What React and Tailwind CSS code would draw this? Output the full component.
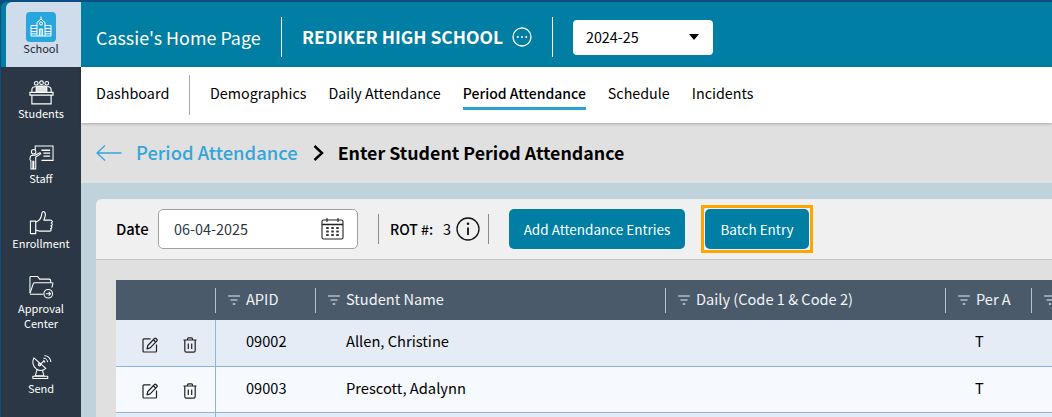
import React from 'react';

const FONT = { fontFamily: '"Noto Sans CJK JP", "Noto Sans", sans-serif' };

function SchoolIcon() {
    return (
        <svg width="24" height="24" viewBox="0 0 24 24" fill="none" stroke="#fff" strokeWidth="1">
            <path d="M2 10.500h6.500M2 10.500v10.500h20V10.500M22 10.500h-6.500" />
            <path d="M8 21V7.500L12 4l4 3.500V21" />
            <path d="M12 4V1.500" />
            <circle cx="12" cy="8.500" r="1.500" />
            <path d="M10.500 21v-7h3v7M12 14v7" />
            <path d="M2 13.500h6M2 16.500h6M2 18.800h6M16 13.500h6M16 16.500h6M16 18.800h6" />
        </svg>
    );
}

function StudentsIcon() {
    return (
        <svg className="shrink-0" width="25" height="25" viewBox="0 0 26 26" fill="none" stroke="#fff" strokeWidth="1.200">
            <circle cx="7.500" cy="3.500" r="1.900" />
            <circle cx="13" cy="2.800" r="1.900" />
            <circle cx="18.500" cy="3.500" r="1.900" />
            <path d="M3 12.500v-2.500c0-2 1.500-3 3-3h1.500M23 12.500v-2.500c0-2-1.500-3-3-3h-1.500" />
            <path d="M7.500 12.500v-4c0-1.500 1-2.300 2.500-2.300h6c1.500 0 2.500.8 2.500 2.300v4" fill="#fff" fillOpacity="0.850" />
            <path d="M1 12.800h24v3H1zM3 15.800v9h20v-9" />
        </svg>
    );
}

function StaffIcon() {
    return (
        <svg className="shrink-0" width="25" height="25" viewBox="0 0 26 26" fill="none" stroke="#fff" strokeWidth="1.100">
            <path d="M6.500 5.500V1h18.500v15H13" />
            <path d="M13 5.500h9M15 8.500h7M15 11.500h7" strokeWidth="1.400" />
            <circle cx="4.800" cy="7" r="2.300" />
            <path d="M1 14.500c0-3 1-4 3.500-4h2l5-2.500.7 1.200-5.200 3.300V25h-2v-8h-1v8h-2V16.500L1 15z" />
        </svg>
    );
}

function ThumbIcon() {
    return (
        <svg className="shrink-0" width="25" height="25" viewBox="0 0 26 26" fill="none" stroke="#fff" strokeWidth="1.200" strokeLinejoin="round">
            <path d="M1.500 11.500h5.500v13H1.500z" />
            <path d="M7 12.500c3-1 5.500-4 6-7 .3-2 .5-3.500 1.500-3.800 1.800-.4 2.700 1.500 2.500 3.500-.2 2-1 3.500-1.500 5.300h7c2 0 2.300 2.600.5 3 1.700.4 1.500 2.800-.2 3 1.400.6 1.200 2.700-.4 3 1 .8.700 2.500-1 2.500H12c-2 0-3-1-5-1" />
        </svg>
    );
}

function FolderIcon() {
    return (
        <svg className="shrink-0" width="25" height="25" viewBox="0 0 26 26" fill="none" stroke="#fff" strokeWidth="1.100" strokeLinejoin="round">
            <path d="M1 19V2.500c0-.7.500-1 1-1h7l2 2.800h10c1 0 1.500.5 1.500 1.500v2" />
            <path d="M1 19l3.500-10c.2-.6.600-1 1.300-1H24c.8 0 1 .6.800 1.200l-1 4" />
            <path d="M1 20h14" />
            <circle cx="20" cy="19.500" r="4.500" />
            <path d="M17.500 19.500h5M20.500 17.500l2 2-2 2" />
        </svg>
    );
}

function DishIcon() {
    return (
        <svg className="shrink-0" width="25" height="25" viewBox="0 0 26 26" fill="none" stroke="#fff" strokeWidth="1.100" strokeLinejoin="round">
            <path d="M5 3c-2 4-1 9 2.500 11.500 3 2 7 2 10-.5z" />
            <circle cx="11" cy="10" r="1.300" />
            <path d="M11 10l5-4" />
            <path d="M15 3.500c2-.3 4 1.500 4.500 4M16 .8c3.500-.3 6.500 2.500 6.800 6.500M14.500 6c1 0 2 .8 2.200 2" />
            <path d="M8.500 15l-2 6.500h9l-1.500-5.500" />
            <path d="M4 22h15.500v2.500H4z" />
        </svg>
    );
}

function EllipsisCircle() {
    return (
        <svg width="20" height="20" viewBox="0 0 20 20" fill="none" stroke="#fff" strokeWidth="1.300">
            <circle cx="10" cy="10" r="9" />
            <circle cx="5.800" cy="10" r="1" fill="#fff" stroke="none" />
            <circle cx="10" cy="10" r="1" fill="#fff" stroke="none" />
            <circle cx="14.200" cy="10" r="1" fill="#fff" stroke="none" />
        </svg>
    );
}

function CalendarIcon() {
    return (
        <svg width="23" height="23" viewBox="0 0 23 23" fill="none" stroke="#222" strokeWidth="1.100">
            <rect x="1" y="3" width="21" height="19" rx="1.500" />
            <path d="M1 7.500h21" strokeWidth="1.300" />
            <path d="M6 1v4M17 1v4" />
            {[6.5, 11.5, 16.5].map(x => [11, 14.500, 18].map(y => (
                <rect key={`${x}-${y}`} x={x - 1.300} y={y - 1} width="2.600" height="2" rx="0.600" fill="#333" stroke="none" />
            )))}
        </svg>
    );
}

function FilterIcon() {
    return (
        <svg width="12" height="10" viewBox="0 0 12 10" fill="none" stroke="#e5e9ee" strokeWidth="1.100">
            <path d="M0 1h12M2.500 5h7" />
            <path d="M4.800 9h2.400" strokeWidth="1.300" />
        </svg>
    );
}

function EditIcon() {
    return (
        <svg width="16" height="16" viewBox="0 0 16 16" fill="none" stroke="#222" strokeWidth="1.200" strokeLinejoin="round">
            <path d="M8.500 1.800H2c-.6 0-1 .4-1 1V14c0 .6.400 1 1 1h11.500c.5 0 1-.4 1-1V7.500" />
            <path d="M5 11.800l.8-3.300L12.500 1.500c.4-.4 1-.4 1.400 0l1 1c.4.400.4 1 0 1.400L8.200 10.900z" />
            <path d="M11.300 2.800l2.600 2.500" />
        </svg>
    );
}

function TrashIcon() {
    return (
        <svg width="14" height="16" viewBox="0 0 14 16" fill="none" stroke="#222" strokeWidth="1.200" strokeLinejoin="round">
            <path d="M.5 3h13M4.500 3V2c0-.7.400-1.200 1-1.200h3c.6 0 1 .5 1 1.200v1" />
            <path d="M1.800 3v10.500c0 1 .7 1.700 1.600 1.700h7.200c.9 0 1.600-.7 1.600-1.700V3" />
            <path d="M5.300 6.500v5.500M8.700 6.500v5.500" />
        </svg>
    );
}

const sideItems = [
    { label: ['Students'], icon: <StudentsIcon />, h: 'h-[65px]' },
    { label: ['Staff'], icon: <StaffIcon />, h: 'h-[65px]' },
    { label: ['Enrollment'], icon: <ThumbIcon />, h: 'h-[65px]' },
    { label: ['Approval', 'Center'], icon: <FolderIcon />, h: 'h-[80px]' },
    { label: ['Send'], icon: <DishIcon />, h: 'h-[65px]' },
];

const tabs = [
    { name: 'Demographics', w: 'ml-5' },
    { name: 'Daily Attendance', w: 'ml-[22px]' },
    { name: 'Period Attendance', w: 'ml-[22px]', active: true },
    { name: 'Schedule', w: 'ml-[22px]' },
    { name: 'Incidents', w: 'ml-[22px]' },
];

const columns = [
    { name: 'APID', w: 'w-[100px]' },
    { name: 'Student Name', w: 'w-[350px]' },
    { name: 'Daily (Code 1 & Code 2)', w: 'w-[280px]' },
    { name: 'Per A', w: 'w-[86px]' },
    { name: '', w: 'w-[40px]' },
];

const rows = [
    { apid: '09002', name: 'Allen, Christine', perA: 'T', bg: 'bg-[#e5ecf5]', h: 'h-[47px]', pad: 'pb-[5px]' },
    { apid: '09003', name: 'Prescott, Adalynn', perA: 'T', bg: 'bg-[#f6f9fd]', h: 'h-[46px]', pad: 'pb-[3px]' },
    { apid: '', name: '', perA: '', bg: 'bg-[#e5ecf5]', h: 'h-[46px]', pad: '' },
];

export default function App() {
    return (
        <div className="w-[1052px] h-[417px] overflow-hidden flex bg-[#0b4f82] pt-[2px] text-black" style={FONT}>
            <div className="w-[81px] shrink-0 flex flex-col bg-[#2b3744] border-l border-[#0b4f82] rounded-tl-[6px] overflow-hidden">
                <div className="h-[65px] shrink-0 flex bg-[#007ea3]">
                    <div className="w-[5px] shrink-0"></div>
                    <div className="flex-1 bg-[#cfdcec] rounded-tl-[6px] flex flex-col items-center pt-[10px] pr-[5px]">
                        <div className="w-[30px] h-[30px] rounded-[4px] bg-[#29a7dc] flex items-center justify-center">
                            <SchoolIcon />
                        </div>
                        <div className="text-[11px] leading-[16px] mt-[-2px] text-[#1c2630]">School</div>
                    </div>
                </div>
                {sideItems.map(item => (
                    <div key={item.label[0]} className={`${item.h} shrink-0 flex flex-col items-center pt-[13px] text-white`}>
                        {item.icon}
                        <div className="mt-[1px] text-center">
                            {item.label.map(line => (
                                <div key={line} className="text-[11px] leading-[15px]">{line}</div>
                            ))}
                        </div>
                    </div>
                ))}
            </div>

            <div className="flex-1 min-w-0 flex flex-col">
                <div className="h-[65px] shrink-0 bg-[#007ea3] flex items-center text-white pt-[5px]">
                    <div className="ml-[15px] text-[17.900px] leading-[28px] w-[185px] whitespace-nowrap">Cassie's Home Page</div>
                    <div className="w-px h-[40px] bg-white"></div>
                    <div className="ml-[20px] w-[200px] text-[17.500px] leading-[28px] font-bold whitespace-nowrap">REDIKER HIGH SCHOOL</div>
                    <div className="ml-[10px]"><EllipsisCircle /></div>
                    <div className="ml-[20px] w-px h-[40px] bg-white"></div>
                    <div className="ml-[20px] w-[140px] h-[35px] bg-white rounded-[4px] flex items-center justify-between pl-[13px] pr-[14px] text-black">
                        <span className="text-[14.300px] leading-[20px]">2024-25</span>
                        <span className="w-0 h-0 border-x-[5px] border-x-transparent border-t-[6px] border-t-black"></span>
                    </div>
                </div>

                <div className="h-[56px] shrink-0 bg-white flex items-center relative z-10 shadow-[0_1px_3px_rgba(0,0,0,0.25)]">
                    <div className="ml-[15px] mb-[4px] text-[14.400px] leading-[20px] w-[93px]">Dashboard</div>
                    <div className="w-px h-[40px] bg-[#a8a8a8]"></div>
                    {tabs.map(tab => (
                        <div key={tab.name} className={`${tab.w} mb-[4px] relative leading-[20px] ${tab.active ? 'text-[14px] font-medium' : 'text-[14.300px]'}`}>
                            {tab.name}
                            {tab.active && <div className="absolute left-0 right-0 top-[24px] h-[3px] bg-[#29a3d6]"></div>}
                        </div>
                    ))}
                </div>

                <div className="h-[60px] shrink-0 bg-[#e0e0e0] flex items-center">
                    <svg className="ml-[15px]" width="26" height="18" viewBox="0 0 26 18" fill="none" stroke="#35a5d9" strokeWidth="1.300">
                        <path d="M25.500 9H1M9 1.500L1 9l8 7.500" />
                    </svg>
                    <div className="ml-[14px] mb-[2px] text-[18.400px] leading-[28px] font-medium text-[#35a5d9] whitespace-nowrap">Period Attendance</div>
                    <svg className="ml-[15px]" width="11" height="16" viewBox="0 0 11 16" fill="none" stroke="#000" strokeWidth="2.400">
                        <path d="M1.500 1l7.500 7-7.500 7" />
                    </svg>
                    <div className="ml-[14px] mb-[2px] text-[17.800px] leading-[28px] font-bold whitespace-nowrap">Enter Student Period Attendance</div>
                </div>

                <div className="flex-1 min-h-0 bg-[#bfd3dc] pt-[16px] pl-[15px]">
                    <div className="w-[1100px] h-[300px] bg-[#e0e0e0] rounded-tl-[6px] overflow-hidden">
                        <div className="h-[61px] bg-[#f0f0f0] border-b border-[#c4c4c4] flex items-center pb-[1px]">
                            <div className="ml-[20px] w-[32px] text-[14.800px] leading-[20px] font-medium">Date</div>
                            <div className="ml-[10px] w-[200px] h-[40px] bg-white rounded-[5px] border border-[#a0a0a0] flex items-center justify-between pl-[15px] pr-[13px]">
                                <span className="text-[14.400px] leading-[20px] text-[#2b3744]">06-04-2025</span>
                                <CalendarIcon />
                            </div>
                            <div className="ml-[20px] w-px h-[30px] bg-[#8a8a8a]"></div>
                            <div className="ml-[11px] w-[43px] text-[14px] leading-[20px] font-medium whitespace-nowrap">ROT #:</div>
                            <div className="ml-[10px] w-[8px] text-[14.500px] leading-[20px]">3</div>
                            <svg className="ml-[5px]" width="24" height="24" viewBox="0 0 24 24" fill="none" stroke="#111" strokeWidth="1.300">
                                <circle cx="12" cy="12" r="11" />
                                <path d="M12 10.500v7.500" strokeWidth="1.800" />
                                <circle cx="12" cy="6.800" r="1.300" fill="#111" stroke="none" />
                            </svg>
                            <div className="ml-[8px] w-px h-[30px] bg-[#8a8a8a]"></div>
                            <div className="ml-[20px] w-[176px] h-[40px] rounded-[5px] bg-[#007ea3] text-white flex items-center justify-center text-[13.500px] leading-[20px]">
                                Add Attendance Entries
                            </div>
                            <div className="ml-[16px] border-[3px] border-[#ffa500] p-[1px]">
                                <div className="w-[104px] h-[40px] rounded-[5px] bg-[#007ea3] text-white flex items-center justify-center text-[13.500px] leading-[20px]">
                                    Batch Entry
                                </div>
                            </div>
                        </div>

                        <div className="mt-[20px] ml-[20px]">
                            <div className="h-[40px] bg-[#4a5a6b] flex items-center text-[#f2f4f6]">
                                <div className="w-[99px] shrink-0"></div>
                                {columns.map(col => (
                                    <div key={col.name || 'more'} className={`${col.w} shrink-0 h-[25px] border-l border-[#b9c2cb] flex items-center pl-[12px]`}>
                                        <FilterIcon />
                                        {col.name && <span className="ml-[6px] mb-[2px] text-[14.600px] leading-[20px] whitespace-nowrap">{col.name}</span>}
                                    </div>
                                ))}
                            </div>
                            {rows.map((row, i) => (
                                <div key={i} className={`${row.h} ${row.bg} border-b border-[#8fb4dc] flex items-center`}>
                                    <div className="w-[99px] shrink-0 flex items-center pl-[26px] pt-[3px] gap-[25px]">
                                        {row.apid && <EditIcon />}
                                        {row.apid && <TrashIcon />}
                                    </div>
                                    <div className={`w-[100px] shrink-0 self-stretch border-l border-[#8fb4dc] pl-[30px] flex items-center text-[14.600px] leading-[20px] ${row.pad}`}>{row.apid}</div>
                                    <div className={`w-[350px] shrink-0 pl-[31px] text-[14.700px] leading-[20px] ${row.pad}`}>{row.name}</div>
                                    <div className="w-[280px] shrink-0"></div>
                                    <div className={`pl-[30px] text-[14.600px] leading-[20px] ${row.pad}`}>{row.perA}</div>
                                </div>
                            ))}
                        </div>
                    </div>
                </div>
            </div>
        </div>
    );
}
